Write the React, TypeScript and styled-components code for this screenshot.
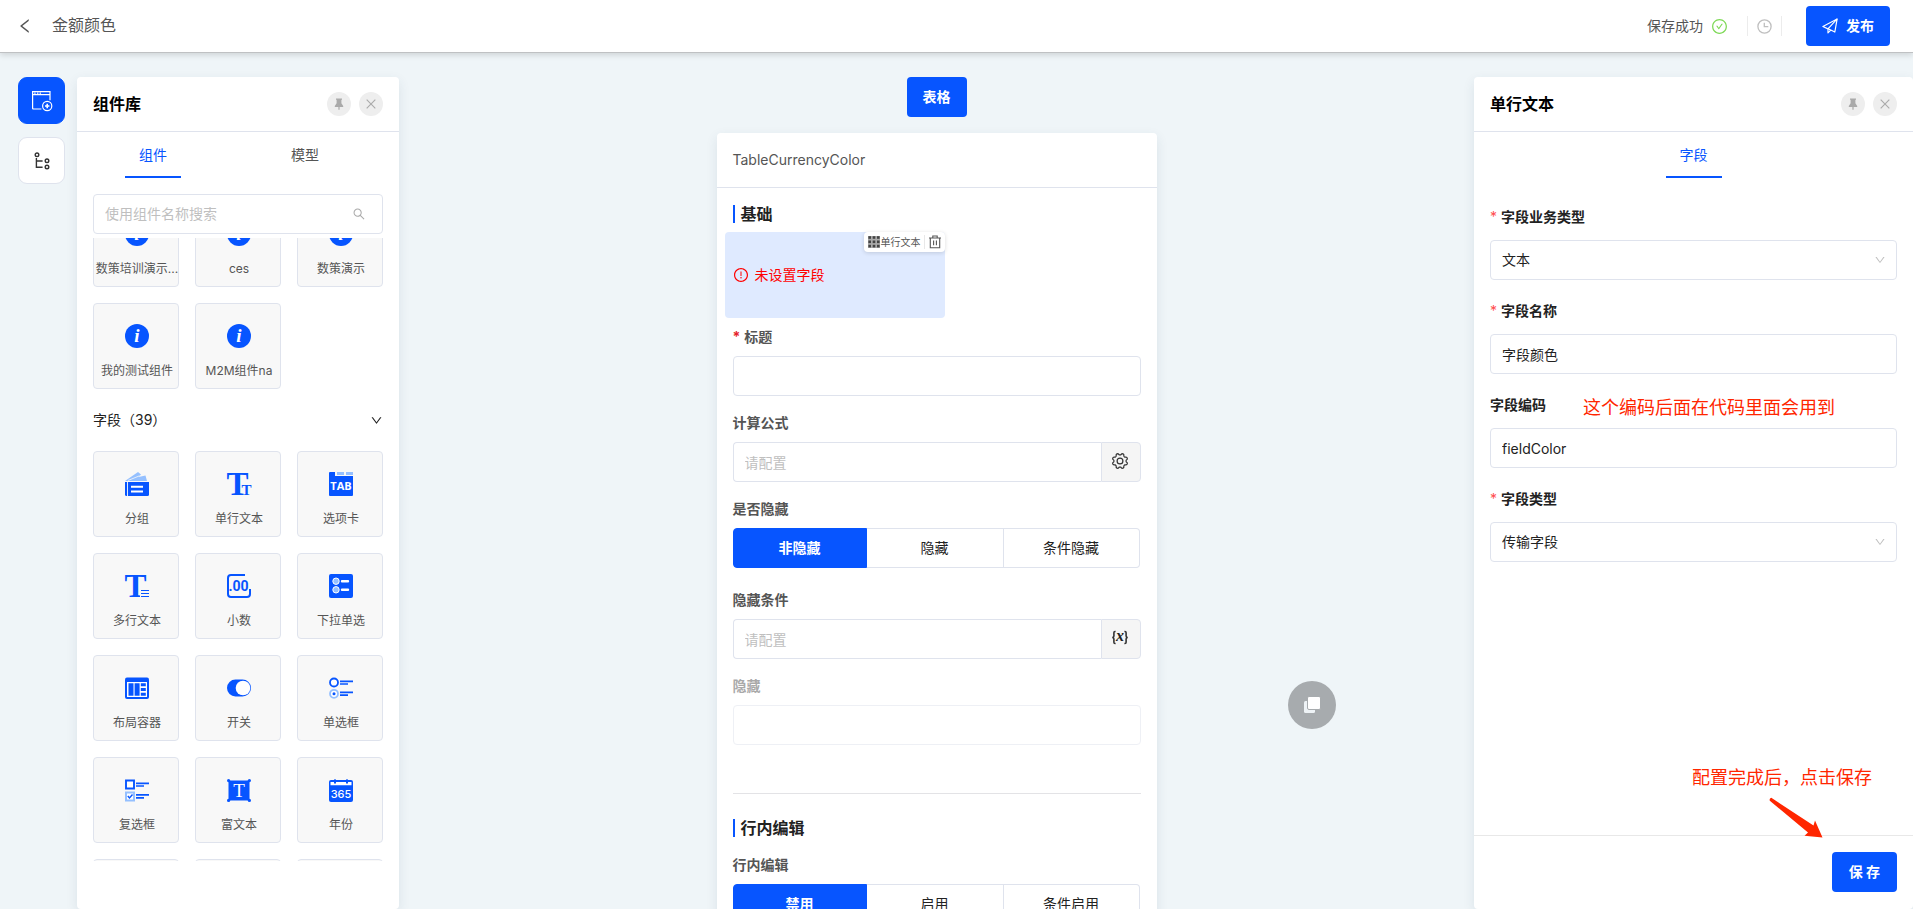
import React, { useId, useLayoutEffect, useRef, useState } from "react";
import styled, { createGlobalStyle, css } from "styled-components";
import {
  AiOutlineCheckCircle,
  AiOutlineClose,
  AiOutlineDown,
  AiOutlineExclamationCircle,
  AiOutlineLeft,
  AiOutlineSearch,
} from "react-icons/ai";

const blue = "#0755ff";
const paleBlue = "#95c0ff";
const line = "#dfe3ed";

const GlobalStyle = createGlobalStyle`
  *, *::before, *::after { box-sizing: border-box; }
  body {
    margin: 0;
    background: #eff5f8;
    color: #222;
    font: 14px/22px Inter, "Noto Sans CJK SC", sans-serif;
  }
  button, input, select { font: inherit; color: inherit; }
  button { cursor: pointer; }
`;

/* ---------- page frame ---------- */

const Page = styled.div`
  display: flex;
  flex-direction: column;
  height: 100vh;
  overflow: hidden;
`;

const TopBar = styled.header`
  position: relative;
  z-index: 1;
  display: flex;
  flex: none;
  align-items: center;
  height: 53px;
  padding: 0 23px 0 16px;
  background: #fff;
  border-bottom: 1px solid #bfc1c3;
  box-shadow: 0 2px 6px rgba(0, 0, 0, 0.14);
  color: #555;
`;

const BackButton = styled.button`
  display: flex;
  padding: 0;
  margin-right: 18px;
  border: 0;
  background: none;
  font-size: 18px;
`;

const PageTitle = styled.h1`
  flex: 1;
  margin: 0;
  padding-bottom: 2px;
  font-size: 16px;
  font-weight: 400;
  line-height: 24px;
`;

const SaveState = styled.span`
  display: flex;
  align-items: center;
  gap: 8px;
  margin-right: 19px;
  svg {
    font-size: 17px;
    color: #7ed957;
  }
`;

const HistoryButton = styled.button`
  display: flex;
  align-items: center;
  height: 20px;
  padding: 0 9px;
  margin-right: 24px;
  border: solid #ececec;
  border-width: 0 1px;
  background: none;
  color: #bfbfbf;
`;

const PrimaryButton = styled.button<{ $pad: number }>`
  display: flex;
  flex: none;
  align-items: center;
  justify-content: center;
  gap: 8px;
  height: 40px;
  padding: 0 ${(p) => p.$pad}px;
  border: 0;
  border-radius: 4px;
  background: ${blue};
  color: #fff;
  font-weight: 700;
`;

const Workspace = styled.div`
  display: flex;
  flex: 1;
  min-height: 0;
  padding-top: 24px;
`;

const Rail = styled.nav`
  display: flex;
  flex: none;
  flex-direction: column;
  gap: 13px;
  padding: 0 12px 0 18px;
`;

const RailButton = styled.button<{ $active?: boolean }>`
  display: flex;
  align-items: center;
  justify-content: center;
  width: 47px;
  height: 47px;
  padding: 0;
  border: 1px solid ${(p) => (p.$active ? blue : line)};
  border-radius: 9px;
  background: ${(p) => (p.$active ? blue : "#fff")};
  color: ${(p) => (p.$active ? "#fff" : "#333")};
`;

/* ---------- side panels ---------- */

const Panel = styled.aside<{ $width: number }>`
  position: relative;
  display: flex;
  flex: none;
  flex-direction: column;
  width: ${(p) => p.$width}px;
  border-radius: 4px;
  background: #fff;
  box-shadow: 0 4px 12px rgba(40, 70, 100, 0.1);
`;

const PanelHeader = styled.div`
  display: flex;
  flex: none;
  align-items: center;
  gap: 8px;
  height: 55px;
  padding: 0 16px;
  border-bottom: 1px solid ${line};
`;

const PanelTitle = styled.h2`
  flex: 1;
  margin: 0;
  color: #000;
  font-size: 16px;
  font-weight: 700;
  line-height: 24px;
`;

const RoundButton = styled.button`
  display: flex;
  align-items: center;
  justify-content: center;
  width: 24px;
  height: 24px;
  padding: 0;
  border: 0;
  border-radius: 50%;
  background: #eee;
  color: #aaa;
`;

const Tabs = styled.div<{ $centered?: boolean }>`
  display: flex;
  flex: none;
  gap: 96px;
  padding: 0 48px;
  ${(p) =>
    p.$centered &&
    css`
      justify-content: center;
    `}
`;

const Tab = styled.button<{ $active?: boolean }>`
  width: 56px;
  height: 46px;
  padding: 12px 0 10px;
  border: 0;
  border-bottom: 2px solid ${(p) => (p.$active ? blue : "transparent")};
  background: none;
  color: ${(p) => (p.$active ? blue : "#555")};
  line-height: 22px;
`;

const SearchBox = styled.label`
  display: flex;
  flex: none;
  align-items: center;
  height: 40px;
  margin: 16px 16px 4px;
  padding: 0 16px 0 11px;
  border: 1px solid ${line};
  border-radius: 4px;
  color: #aaa;
  input {
    flex: 1;
    min-width: 0;
    padding: 0;
    border: 0;
    outline: 0;
    background: none;
    color: #222;
  }
  input::placeholder {
    color: #bfbfbf;
  }
`;

const Library = styled.div`
  flex: 1;
  min-height: 0;
  margin-bottom: 48px;
  padding: 0 16px;
  overflow-y: auto;
  scrollbar-width: none;
`;

const CardGrid = styled.div`
  display: grid;
  grid-template-columns: repeat(3, 86px);
  gap: 16px;
`;

const ComponentCard = styled.button`
  display: flex;
  flex-direction: column;
  align-items: center;
  gap: 14px;
  height: 86px;
  padding: 20px 0 0 2px;
  border: 1px solid ${line};
  border-radius: 4px;
  background: #f8f8f8;
  color: #555;
  font-size: 12px;
  line-height: 18px;
  span {
    white-space: nowrap;
  }
  svg {
    flex: none;
  }
`;

const GroupToggle = styled.button`
  display: flex;
  align-items: center;
  justify-content: space-between;
  width: 100%;
  height: 62px;
  padding: 0;
  border: 0;
  background: none;
`;

/* ---------- canvas ---------- */

const Canvas = styled.main`
  position: relative;
  display: flex;
  flex: 1;
  flex-direction: column;
  align-items: center;
  gap: 16px;
  min-width: 0;
`;

const FormCard = styled.section`
  flex: 1 0 auto;
  width: 440px;
  border-radius: 4px;
  background: #fff;
  box-shadow: 0 4px 12px rgba(40, 70, 100, 0.1);
`;

const FormCardHeader = styled.div`
  height: 55px;
  padding: 16px;
  border-bottom: 1px solid ${line};
  color: #555;
`;

const FormBody = styled.div`
  padding: 0 8px;
`;

const SectionTitle = styled.h3`
  display: flex;
  align-items: center;
  gap: 6px;
  margin: 0;
  padding: 16px 8px 8px;
  font-size: 16px;
  font-weight: 700;
  line-height: 20px;
  &::before {
    content: "";
    width: 2px;
    height: 18px;
    background: ${blue};
  }
`;

const Divider = styled.hr`
  height: 1px;
  margin: 40px 8px 8px;
  border: 0;
  background: #e3e3e6;
`;

const SelectedSlot = styled.div`
  position: relative;
  display: flex;
  align-items: center;
  gap: 6px;
  width: 220px;
  height: 86px;
  padding: 0 8px;
  border-radius: 4px;
  background: #dfeaff;
  color: #f00;
`;

const SlotTools = styled.div`
  position: absolute;
  top: 0;
  right: 0;
  display: flex;
  align-items: center;
  height: 20px;
  padding: 0 4px;
  border-radius: 4px;
  background: #fff;
  box-shadow: 0 1px 4px rgba(0, 0, 0, 0.14);
  color: #555;
  font-size: 10px;
  line-height: 20px;
  span {
    margin-left: 1px;
  }
  button {
    display: flex;
    padding: 0 0 0 4px;
    margin-left: 3px;
    border: 0;
    border-left: 1px solid #e8e8e8;
    background: none;
  }
`;

const FormField = styled.div<{ $faded?: boolean; $roomy?: boolean }>`
  display: flex;
  flex-direction: column;
  gap: 8px;
  padding: 8px 8px ${(p) => (p.$roomy ? 13 : 8)}px;
  opacity: ${(p) => (p.$faded ? 0.5 : 1)};
`;

const FieldLabel = styled.label`
  color: #555;
  font-weight: 700;
`;

const Star = styled.span`
  margin-right: 4px;
  color: #e5232b;
`;

const inputLook = css`
  width: 100%;
  min-width: 0;
  height: 40px;
  padding: 0 11px;
  border: 1px solid ${line};
  border-radius: 4px;
  outline: 0;
  background: #fff;
  &::placeholder {
    color: #bfbfbf;
  }
`;

const TextInput = styled.input`
  ${inputLook}
`;

const AddonGroup = styled.div`
  display: flex;
  ${TextInput} {
    border-radius: 4px 0 0 4px;
    border-right: 0;
  }
`;

const AddonButton = styled.button`
  display: flex;
  flex: none;
  align-items: center;
  justify-content: center;
  width: 40px;
  height: 40px;
  padding: 0 2px 2px 0;
  border: 1px solid ${line};
  border-radius: 0 4px 4px 0;
  background: #f5f5f5;
`;

const Segments = styled.div`
  display: grid;
  grid-template-columns: 134fr 137fr 136fr;
  height: 40px;
  margin-right: 1px;
`;

const Segment = styled.label`
  border: 1px solid ${line};
  border-left-width: 0;
  line-height: 38px;
  text-align: center;
  cursor: pointer;
  input {
    position: absolute;
    opacity: 0;
    pointer-events: none;
  }
  &:first-child {
    border-left-width: 1px;
    border-radius: 4px 0 0 4px;
  }
  &:last-child {
    border-radius: 0 4px 4px 0;
  }
  &:has(input:checked) {
    border-color: ${blue};
    background: ${blue};
    color: #fff;
    font-weight: 700;
  }
`;

const FloatingButton = styled.button`
  position: absolute;
  right: 138px;
  bottom: 180px;
  display: flex;
  align-items: center;
  justify-content: center;
  width: 48px;
  height: 48px;
  padding: 0;
  border: 0;
  border-radius: 50%;
  background: #a7abae;
`;

/* ---------- property form ---------- */

const PropertyForm = styled.form`
  display: flex;
  flex: 1;
  flex-direction: column;
  gap: 20px;
  padding: 28px 16px 0;
`;

const PropertyField = styled.div`
  display: flex;
  flex-direction: column;
  gap: 12px;
  label {
    font-weight: 700;
  }
  label span {
    color: #ff4d4f;
    font-weight: 400;
  }
`;

const SelectBox = styled.div`
  display: grid;
  align-items: center;
  > * {
    grid-area: 1 / 1;
  }
  select {
    ${inputLook}
    appearance: none;
  }
  svg {
    justify-self: end;
    margin-right: 11px;
    color: #bfbfbf;
    pointer-events: none;
  }
`;

const PanelFooter = styled.div`
  display: flex;
  flex: none;
  justify-content: flex-end;
  height: 74px;
  padding: 16px;
  border-top: 1px solid #e8e8e8;
`;

const Note = styled.p<{ $left: number; $top?: number; $bottom?: number }>`
  position: absolute;
  left: ${(p) => p.$left}px;
  ${(p) => p.$top !== undefined && `top: ${p.$top}px;`}
  ${(p) => p.$bottom !== undefined && `bottom: ${p.$bottom}px;`}
  margin: 0;
  color: #ff2600;
  font-size: 18px;
  line-height: 26px;
  white-space: nowrap;
`;

const NoteArrow = styled.svg`
  position: absolute;
  right: 90px;
  bottom: 70px;
`;

/* ---------- drawings ---------- */

const PinIcon = () => (
  <svg width="10" height="12" viewBox="0 0 10 12" fill="currentColor" aria-hidden>
    <path d="M2 0.5h6v1L7.4 2v3.2L9.2 8v1H5.6v2.6L5 12l-.6-.4V9H.8V8l1.8-2.8V2L2 1.5z" />
  </svg>
);

const ClockIcon = () => (
  <svg width="15" height="15" viewBox="0 0 15 15" fill="none" stroke="currentColor" strokeWidth="1.3" aria-hidden>
    <circle cx="7.5" cy="7.5" r="6.6" />
    <path d="M7.3 3.8v3.8h4" />
  </svg>
);

const PlaneIcon = () => (
  <svg width="16" height="16" viewBox="0 0 15 15" fill="none" stroke="currentColor" strokeWidth="1.1" strokeLinejoin="round" aria-hidden>
    <path d="M14.2 0.9 12 13.2 8.2 11.3 5.6 14V10.2L0.8 8z" />
    <path d="M14.2 0.9 5.6 10.2M8.2 11.3 5.8 10.2" />
  </svg>
);

const WindowPlusIcon = () => (
  <svg width="22" height="22" viewBox="0 0 22 22" fill="none" stroke="currentColor" strokeWidth="1.2" aria-hidden>
    <path d="M10.4 19H2.6Q1.6 19 1.6 18V1.6H19v8.6M1.6 4.7H19" />
    <path d="M3.2 3.1h1.4M6 3.1h1.4M8.6 3.1H10" />
    <circle cx="16.2" cy="16" r="4.6" />
    <path d="M16.2 13.8v4.4M14 16h4.4" strokeWidth="1.6" />
  </svg>
);

const TreeIcon = () => (
  <svg width="18" height="18" viewBox="0 0 18 18" fill="none" stroke="currentColor" strokeWidth="1.4" aria-hidden>
    <circle cx="4" cy="2.8" r="1.8" />
    <circle cx="14" cy="8.8" r="1.8" />
    <circle cx="14" cy="15" r="1.8" />
    <path d="M3.4 6v9.2h6.2M3.4 9h6.2" />
  </svg>
);

const GridIcon = () => (
  <svg width="12" height="12" viewBox="0 0 12 12" aria-hidden>
    <rect width="12" height="12" fill="#aaa" />
    {[0, 4.3, 8.6].map((x) =>
      [0, 4.3, 8.6].map((y) => (
        <rect key={`${x}-${y}`} x={x + 0.4} y={y + 0.2} width="2.6" height="2.6" fill="#444" />
      ))
    )}
  </svg>
);

const TrashIcon = () => (
  <svg width="12" height="14" viewBox="0 0 12 14" fill="none" stroke="currentColor" strokeWidth="1.1" aria-hidden>
    <path d="M0 3h12M3.8 3V1h4.4v2M1.3 3v9.8h9.4V3M4.6 5.4v4.8M7.4 5.4v4.8" />
  </svg>
);

// Outline of a cog with eight rounded teeth and a notch at the top.
const cogOutline =
  Array.from({ length: 96 }, (_, i) => {
    const a = (i / 96) * Math.PI * 2;
    const r = 6.9 - 0.85 * Math.tanh(2 * Math.cos(8 * a));
    return `${i ? "L" : "M"}${(9 + r * Math.sin(a)).toFixed(2)} ${(9 - r * Math.cos(a)).toFixed(2)}`;
  }).join("") + "z";

const GearIcon = () => (
  <svg width="18" height="18" viewBox="0 0 18 18" fill="none" stroke="#333" strokeWidth="1.2" strokeLinejoin="round" aria-hidden>
    <path d={cogOutline} />
    <circle cx="9" cy="9" r="2.9" />
  </svg>
);

const VariableIcon = () => (
  <svg width="18" height="16" viewBox="0 0 18 16" aria-hidden>
    <path
      d="M4.6 1.5H4Q2.9 1.5 2.9 2.8V6Q2.9 7.5 1.2 7.5 2.9 7.5 2.9 9V12.2Q2.9 13.5 4 13.5H4.6M13.4 1.5H14Q15.1 1.5 15.1 2.8V6Q15.1 7.5 16.8 7.5 15.1 7.5 15.1 9V12.2Q15.1 13.5 14 13.5H13.4"
      fill="none"
      stroke="#333"
      strokeWidth="1.6"
    />
    <text x="9" y="11" textAnchor="middle" fontFamily="Liberation Serif, serif" fontStyle="italic" fontWeight="700" fontSize="16" fill="#222">
      x
    </text>
  </svg>
);

const CopyIcon = () => (
  <svg width="18" height="18" viewBox="0 0 18 18" aria-hidden>
    <rect x="1" y="5" width="11" height="12" rx="1.5" fill="#eef3f6" />
    <rect x="4.5" y="0.5" width="13" height="13" rx="1.5" fill="#fff" stroke="#a7abae" />
  </svg>
);

type Kind =
  | "info" | "group" | "text" | "tab" | "lines" | "decimal" | "select"
  | "layout" | "switch" | "radio" | "checkbox" | "rich" | "year" | "blank";

const serif = "Liberation Serif, serif";
const sans = "Inter, sans-serif";

const glyphs: Record<Kind, React.ReactNode> = {
  blank: null,
  info: (
    <>
      <circle cx="12" cy="12" r="12" fill={blue} />
      <text x="12" y="18" textAnchor="middle" fontFamily={serif} fontStyle="italic" fontWeight="700" fontSize="19" fill="#fff">i</text>
    </>
  ),
  group: (
    <>
      <path d="M0 9 13 0l3 2.5-2.500 2.500L20.500 3.500l1.500 5.500z" fill={paleBlue} />
      <path d="M3 8.500 14.500 3.800" stroke="#f8f8f8" strokeWidth="0.8" />
      <path d="M0 10h24v12.500q0 1.500-1.500 1.500h-21Q0 24 0 22.500z" fill={blue} />
      <path d="M2.500 10v14" stroke="#dfeaff" />
      <path d="M6 14.800h12M6 19.500h12" stroke="#fff" strokeWidth="2" />
    </>
  ),
  text: (
    <g fill={blue} fontFamily={serif} fontWeight="700">
      <text x="-0.5" y="23" fontSize="33">T</text>
      <text x="14.5" y="23" fontSize="15">T</text>
    </g>
  ),
  tab: (
    <>
      <path d="M0 1q0-1 1-1h5v4h18v19q0 1-1 1H1q-1 0-1-1z" fill={blue} />
      <path d="M8 1.500h7M17 1.500h7" stroke={paleBlue} strokeWidth="3" />
      <text x="12" y="18" textAnchor="middle" fontFamily="Open Sans, sans-serif" fontWeight="700" fontSize="11" fill="#fff">TAB</text>
    </>
  ),
  lines: (
    <>
      <text x="-0.5" y="23" fontFamily={serif} fontWeight="700" fontSize="33" fill={blue}>T</text>
      <path d="M15 15.500h10v9H15z" fill="#f8f8f8" />
      <path d="M16 16.500h8M16 19.500h8M16 22.500h8" stroke={blue} strokeWidth="1.2" />
    </>
  ),
  decimal: (
    <>
      <path d="M18 1H4Q1 1 1 4v16q0 3 3 3h16q3 0 3-3v-5" fill="none" stroke={blue} strokeWidth="2" />
      <text x="11.5" y="17" textAnchor="middle" fontFamily="Roboto, sans-serif" fontWeight="700" fontSize="14" fill={blue}>.00</text>
    </>
  ),
  select: (
    <>
      <rect width="24" height="24" rx="2" fill={blue} />
      <circle cx="7" cy="7.2" r="3.2" fill={paleBlue} stroke="#fff" />
      <circle cx="7" cy="15.8" r="3.2" fill={paleBlue} stroke="#fff" />
      <path d="M13 7.200h6M13 15.800h6" stroke="#fff" strokeWidth="2.4" strokeLinecap="round" />
    </>
  ),
  layout: (
    <>
      <rect y="1.5" width="24" height="21.5" rx="2" fill={blue} />
      <path d="M2 6h20v15H2z" fill="#fff" />
      <path d="M3.500 7.200h5v12.600h-5zM9.600 7.200h5v12.600h-5zM15.800 7.200h5v3h-5zM15.800 12h5v3h-5zM15.800 16.800h5v3h-5z" fill={blue} />
    </>
  ),
  switch: (
    <>
      <rect y="3.5" width="24" height="17" rx="8.5" fill={blue} />
      <circle cx="16" cy="12" r="7.3" fill="#fff" />
    </>
  ),
  radio: (
    <>
      <circle cx="5" cy="6.5" r="4" fill="#fff" stroke={blue} strokeWidth="1.8" />
      <circle cx="5" cy="17.8" r="4" fill="#fff" stroke={paleBlue} strokeWidth="1.8" />
      <circle cx="5" cy="17.8" r="1.5" fill={blue} />
      <path d="M11 5.300h13M11 8h8M11 16.300h13M11 19.200h8" stroke={blue} strokeWidth="1.7" />
    </>
  ),
  checkbox: (
    <>
      <path d="M1 2.500h8v8H1z" fill="#fff" stroke={blue} strokeWidth="1.9" />
      <path d="M0 13.500h10v10H0z" fill={paleBlue} />
      <path d="M2 15.500h6v6H2z" fill="#fff" />
      <path d="M2.800 18 4.500 20 7.500 16.500" fill="none" stroke={blue} strokeWidth="1.4" />
      <path d="M11 5.300h13M11 8h8M11 16.800h13M11 19.800h8" stroke={blue} strokeWidth="1.7" />
    </>
  ),
  rich: (
    <>
      <path d="M1.500 2.500h21v20h-21z" fill={blue} />
      <g fill={blue}>
        <circle cx="1.6" cy="2.6" r="1.6" /><circle cx="22.4" cy="2.6" r="1.6" />
        <circle cx="1.6" cy="22.4" r="1.6" /><circle cx="22.4" cy="22.4" r="1.6" />
      </g>
      <text x="12" y="18.5" textAnchor="middle" fontFamily={serif} fontSize="19" fill="#fff">T</text>
    </>
  ),
  year: (
    <>
      <rect y="2" width="24" height="22" rx="2" fill={blue} />
      <path d="M1.500 4H5v1.500h2V4h10v1.500h2V4h3.500v3.200h-21z" fill="#fff" />
      <path d="M6 1v4M18 1v4" stroke={blue} strokeWidth="1.2" />
      <text x="12" y="19.5" textAnchor="middle" fontFamily={sans} fontWeight="500" fontSize="11" fill="#fff">365</text>
    </>
  ),
};

/* ---------- assembled parts ---------- */

function Cards({ items }: { items: [Kind, string][] }) {
  return (
    <CardGrid>
      {items.map(([kind, name]) => (
        <ComponentCard key={name} type="button">
          <svg width="24" height="24" viewBox="0 0 24 24" overflow="visible" aria-hidden>
            {glyphs[kind]}
          </svg>
          <span>{name}</span>
        </ComponentCard>
      ))}
    </CardGrid>
  );
}

function PanelTop({ title }: { title: string }) {
  return (
    <PanelHeader>
      <PanelTitle>{title}</PanelTitle>
      <RoundButton type="button" aria-label="固定"><PinIcon /></RoundButton>
      <RoundButton type="button" aria-label="关闭"><AiOutlineClose size={14} /></RoundButton>
    </PanelHeader>
  );
}

function SegmentField({ label, options }: { label: string; options: string[] }) {
  const id = useId();
  const [value, setValue] = useState(options[0]);
  return (
    <FormField $roomy role="radiogroup" aria-labelledby={id}>
      <FieldLabel as="span" id={id}>{label}</FieldLabel>
      <Segments>
        {options.map((o) => (
          <Segment key={o}>
            <input type="radio" name={id} checked={value === o} onChange={() => setValue(o)} />
            {o}
          </Segment>
        ))}
      </Segments>
    </FormField>
  );
}

function ConfigField({ label, icon }: { label: string; icon: React.ReactNode }) {
  const id = useId();
  return (
    <FormField>
      <FieldLabel htmlFor={id}>{label}</FieldLabel>
      <AddonGroup>
        <TextInput id={id} placeholder="请配置" />
        <AddonButton type="button" aria-label="配置">{icon}</AddonButton>
      </AddonGroup>
    </FormField>
  );
}

function Property({ label, value, required, select }: { label: string; value: string; required?: boolean; select?: boolean }) {
  const id = useId();
  return (
    <PropertyField>
      <label htmlFor={id}>
        {required && <Star>*</Star>}
        {label}
      </label>
      {select ? (
        <SelectBox>
          <select id={id} defaultValue={value}>
            <option>{value}</option>
          </select>
          <AiOutlineDown size={12} />
        </SelectBox>
      ) : (
        <TextInput id={id} defaultValue={value} />
      )}
    </PropertyField>
  );
}

const customItems: [Kind, string][] = [
  ["info", "数策培训演示..."],
  ["info", "ces"],
  ["info", "数策演示"],
  ["info", "我的测试组件"],
  ["info", "M2M组件na"],
];

const fieldItems: [Kind, string][] = [
  ["group", "分组"], ["text", "单行文本"], ["tab", "选项卡"],
  ["lines", "多行文本"], ["decimal", "小数"], ["select", "下拉单选"],
  ["layout", "布局容器"], ["switch", "开关"], ["radio", "单选框"],
  ["checkbox", "复选框"], ["rich", "富文本"], ["year", "年份"],
  ["blank", ""], ["blank", ""], ["blank", ""],
];

export default function App() {
  const library = useRef<HTMLDivElement>(null);
  const titleId = useId();
  const hiddenId = useId();

  // The library opens part way down, with the first row of cards half out of view.
  useLayoutEffect(() => {
    if (library.current) library.current.scrollTop = 37;
  }, []);

  return (
    <Page>
      <GlobalStyle />
      <TopBar>
        <BackButton type="button" aria-label="返回"><AiOutlineLeft /></BackButton>
        <PageTitle>金额颜色</PageTitle>
        <SaveState>保存成功<AiOutlineCheckCircle /></SaveState>
        <HistoryButton type="button" aria-label="历史"><ClockIcon /></HistoryButton>
        <PrimaryButton type="button" $pad={16}><PlaneIcon />发布</PrimaryButton>
      </TopBar>

      <Workspace>
        <Rail>
          <RailButton type="button" $active aria-label="组件库"><WindowPlusIcon /></RailButton>
          <RailButton type="button" aria-label="结构"><TreeIcon /></RailButton>
        </Rail>

        <Panel $width={322}>
          <PanelTop title="组件库" />
          <Tabs>
            <Tab type="button" $active>组件</Tab>
            <Tab type="button">模型</Tab>
          </Tabs>
          <SearchBox>
            <input aria-label="搜索组件" placeholder="使用组件名称搜索" />
            <AiOutlineSearch size={14} />
          </SearchBox>
          <Library ref={library}>
            <Cards items={customItems} />
            <GroupToggle type="button">字段（39）<AiOutlineDown size={13} /></GroupToggle>
            <Cards items={fieldItems} />
          </Library>
        </Panel>

        <Canvas>
          <PrimaryButton type="button" $pad={16}>表格</PrimaryButton>
          <FormCard>
            <FormCardHeader>TableCurrencyColor</FormCardHeader>
            <FormBody>
              <SectionTitle>基础</SectionTitle>
              <SelectedSlot>
                <AiOutlineExclamationCircle size={16} />
                未设置字段
                <SlotTools>
                  <GridIcon />
                  <span>单行文本</span>
                  <button type="button" aria-label="删除"><TrashIcon /></button>
                </SlotTools>
              </SelectedSlot>
              <FormField>
                <FieldLabel htmlFor={titleId}><Star>*</Star>标题</FieldLabel>
                <TextInput id={titleId} />
              </FormField>
              <ConfigField label="计算公式" icon={<GearIcon />} />
              <SegmentField label="是否隐藏" options={["非隐藏", "隐藏", "条件隐藏"]} />
              <ConfigField label="隐藏条件" icon={<VariableIcon />} />
              <FormField $faded>
                <FieldLabel htmlFor={hiddenId}>隐藏</FieldLabel>
                <TextInput id={hiddenId} />
              </FormField>
              <Divider />
              <SectionTitle>行内编辑</SectionTitle>
              <SegmentField label="行内编辑" options={["禁用", "启用", "条件启用"]} />
            </FormBody>
          </FormCard>
          <FloatingButton type="button" aria-label="复制"><CopyIcon /></FloatingButton>
        </Canvas>

        <Panel $width={439}>
          <PanelTop title="单行文本" />
          <Tabs $centered>
            <Tab type="button" $active>字段</Tab>
          </Tabs>
          <PropertyForm onSubmit={(e) => e.preventDefault()}>
            <Property label="字段业务类型" value="文本" required select />
            <Property label="字段名称" value="字段颜色" required />
            <Property label="字段编码" value="fieldColor" />
            <Property label="字段类型" value="传输字段" required select />
          </PropertyForm>
          <PanelFooter>
            <PrimaryButton type="button" $pad={17}>保 存</PrimaryButton>
          </PanelFooter>
          <Note $left={109} $top={318}>这个编码后面在代码里面会用到</Note>
          <Note $left={218} $bottom={118}>配置完成后，点击保存</Note>
          <NoteArrow width="54" height="42" viewBox="0 0 54 42" aria-hidden>
            <path d="M2.300 0.800Q0 1.500 0.800 3.800L39 35.500 35.500 38.800 53.500 40.500 46 23.500 44.500 28.500z" fill="#ff2600" />
          </NoteArrow>
        </Panel>
      </Workspace>
    </Page>
  );
}
